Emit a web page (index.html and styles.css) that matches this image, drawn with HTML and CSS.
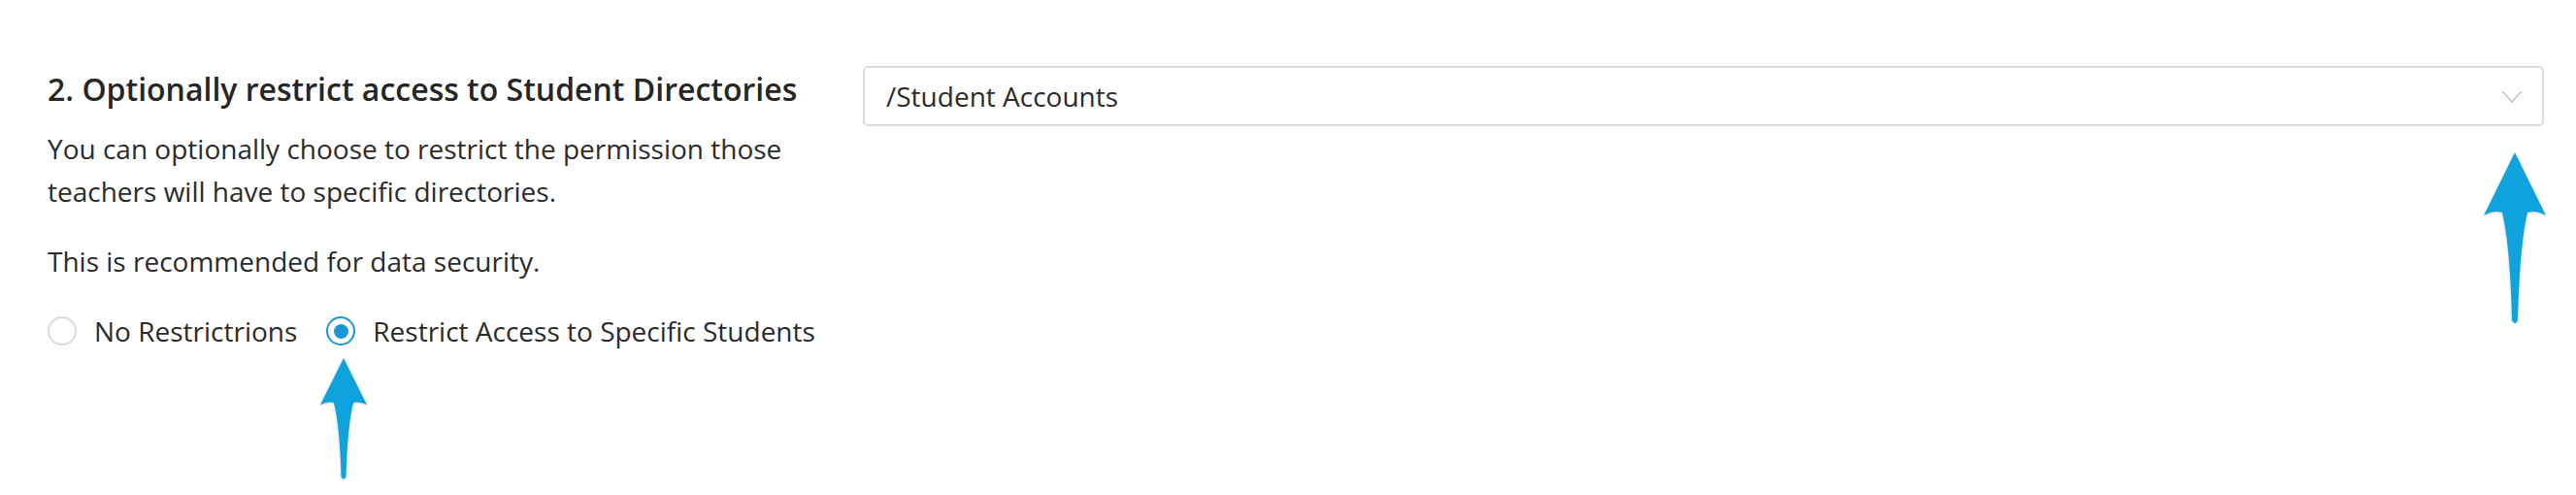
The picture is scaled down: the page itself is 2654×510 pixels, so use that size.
FILE: index.html
```html
<!DOCTYPE html>
<html lang="en">
<head>
  <meta charset="UTF-8">
  <title>Directory restrictions</title>
  <link rel="stylesheet" href="styles.css">
</head>
<body>

<div class="page">
  <div class="row">
    <div class="info">
      <h2>2. Optionally restrict access to Student Directories</h2>
      <p>You can optionally choose to restrict the permission those teachers will have to specific directories.</p>
      <p>This is recommended for data security.</p>

      <div class="choices">
        <label class="choice">
          <span class="radio"></span>
          No Restrictrions
        </label>
        <label class="choice">
          <span class="radio checked"></span>
          Restrict Access to Specific Students
        </label>
      </div>
    </div>

    <div class="field">
      <div class="select">
        <span>/Student Accounts</span>
        <svg class="chevron" width="22" height="13" viewBox="0 0 22 13">
          <polyline points="1,1 11,12 21,1" fill="none" stroke="#c4c4c4" stroke-width="1.5"/>
        </svg>
      </div>
    </div>
  </div>

  <!-- pointer arrows -->
  <svg class="arrow arrow-radio" width="48" height="127" viewBox="0 0 48 127">
    <path d="M24 0 L48 48 Q40 44 34 46 Q28 70 26.5 122 Q24 127 21.5 122 Q20 70 14 46 Q8 44 0 48 Z" fill="#0fa3dd"/>
  </svg>
  <svg class="arrow arrow-select" width="64" height="179" viewBox="0 0 64 179">
    <path d="M32 0 L64 65 Q54 59 45 62 Q37 95 35 173 Q32 179 29 173 Q27 95 19 62 Q10 59 0 65 Z" fill="#0fa3dd"/>
  </svg>
</div>

</body>
</html>
```

FILE: styles.css
```css
body {
  margin: 0;
  font-family: "Open Sans", sans-serif;
  color: #2b2b2b;
  background: #fff;
}
.page {
  position: relative;
  height: 510px;
}
.row {
  display: flex;
  padding: 68px 33px 0 49px;
}
.info {
  flex: 0 0 800px;
  margin-right: 40px;
}
.info h2 {
  margin: 4px 0 0;
  font-size: 32px;
  font-weight: 600;
  line-height: 40px;
  color: #262626;
}
.info p {
  margin: 19px 0 0;
  font-size: 28px;
  line-height: 44px;
}
.info p + p {
  margin-top: 28px;
}
.choices {
  display: flex;
  align-items: center;
  gap: 30px;
  margin-top: 28px;
}
.choice {
  display: flex;
  align-items: center;
  gap: 18px;
  font-size: 28px;
  line-height: 44px;
}
.radio {
  box-sizing: border-box;
  width: 30px;
  height: 30px;
  border: 2px solid #dadada;
  border-radius: 50%;
  display: flex;
  align-items: center;
  justify-content: center;
}
.radio.checked {
  border-color: #1b95d3;
}
.radio.checked::after {
  content: "";
  width: 15px;
  height: 15px;
  border-radius: 50%;
  background: #1b95d3;
}
.field {
  flex: 1;
}
.select {
  box-sizing: border-box;
  height: 62px;
  border: 2px solid #dcdcdc;
  border-radius: 5px;
  display: flex;
  align-items: center;
  justify-content: space-between;
  padding: 0 20px 0 22px;
  font-size: 28px;
}
.arrow {
  position: absolute;
  filter: drop-shadow(0 1px 1px rgba(0,0,0,0.2));
}
.arrow-radio {
  left: 330px;
  top: 369px;
}
.arrow-select {
  left: 2559px;
  top: 157px;
}
```
